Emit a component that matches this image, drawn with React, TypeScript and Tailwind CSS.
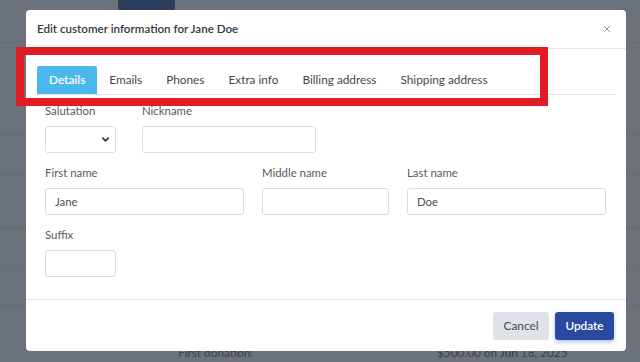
import React from "react";
import { ChevronDown, X } from "lucide-react";

const font = { fontFamily: "Lato, 'Open Sans', sans-serif" };

function Field({ label, width, value, select }: { label: string; width: string; value?: string; select?: boolean }) {
  return (
    <div className={`flex flex-col ${width}`}>
      <div className="h-[15px] text-[11.4px] leading-[15px] text-[#555b63]">{label}</div>
      <div className={`mt-[8px] flex h-[27px] items-center justify-between rounded-[3px] border border-[#d9dce2] bg-white pl-[9px] ${select ? "pr-[4px]" : "pr-[9px]"} text-[11.4px] text-[#4a4f57]`}>
        <span>{value}</span>
        {select && <ChevronDown size={11} strokeWidth={3.5} className="text-[#333]" />}
      </div>
    </div>
  );
}

const tabs = ["Details", "Emails", "Phones", "Extra info", "Billing address", "Shipping address"];

export default function App() {
  return (
    <div className="relative h-[362px] w-[640px] overflow-hidden bg-[#6c727b]" style={font}>
      {/* underlying page (dimmed) */}
      <div className="flex h-full w-full flex-col">
        <div className="flex h-[30px] pl-[118px]">
          <div className="h-[10px] w-[57px] rounded-b-[2px] bg-[#2e3d5c]" />
        </div>
        <div className="mt-[13px] h-px w-full bg-[#666c75]" />
        <div className="mt-[91px] h-px w-full bg-[#666c75]" />
        <div className="mt-[39px] h-px w-full bg-[#666c75]" />
        <div className="mt-[52px] h-px w-full bg-[#62686f]" />
        <div className="mt-[39px] h-px w-full bg-[#666c75]" />
        <div className="mt-[36px] h-px w-full bg-[#666c75]" />
        <div className="mt-[39px] flex h-[18px] items-center bg-[#6d737c] pl-[178px] text-[11.8px] text-[#3c4047]">
          <span className="w-[259px]">First donation:</span>
          <span>$500.00 on Jun 18, 2025</span>
        </div>
      </div>

      {/* modal */}
      <div className="absolute left-[26px] top-[10px] flex h-[341px] w-[600px] flex-col rounded-[4px] bg-white">
        <div className="flex h-[39px] shrink-0 items-center justify-between border-b border-[#e4e6ea] pl-[11px] pr-[14px]">
          <span className="text-[11.6px] font-semibold text-[#33373d]">Edit customer information for Jane Doe</span>
          <X size={10} strokeWidth={1.8} className="text-[#6b6f75]" />
        </div>
        <div className="flex flex-1 flex-col">
          <div className="mx-[11px] mt-[17px] flex h-[29px] border-b border-[#dfe2e6]">
            {tabs.map((t, i) => (
              <div
                key={t}
                className={
                  i === 0
                    ? "flex h-[28px] items-center rounded-t-[2px] bg-[#4ab8ec] px-[12px] text-[11.8px] font-semibold text-white"
                    : "flex h-[28px] items-center px-[12px] text-[11.8px] text-[#43474d]"
                }
              >
                {t}
              </div>
            ))}
          </div>
          <div className="flex flex-col gap-[12px] px-[19px] pt-[8px]">
            <div className="flex gap-[26px]">
              <Field label="Salutation" width="w-[71px]" select />
              <Field label="Nickname" width="w-[174px]" />
            </div>
            <div className="flex gap-[18px]">
              <Field label="First name" width="w-[199px]" value="Jane" />
              <Field label="Middle name" width="w-[127px]" />
              <Field label="Last name" width="w-[199px]" value="Doe" />
            </div>
            <div className="flex">
              <Field label="Suffix" width="w-[71px]" />
            </div>
          </div>
        </div>
        <div className="flex h-[52px] shrink-0 items-start justify-end gap-[6px] border-t border-[#e1e3e7] pr-[12px] pt-[12px]">
          <button className="h-[28px] w-[56px] rounded-[3px] bg-[#dfe2e6] text-[11.8px] text-[#454a51]">Cancel</button>
          <button className="h-[28px] w-[59px] rounded-[3px] bg-[#2a4a9f] text-[11.8px] font-semibold text-white shadow-[0_2px_4px_rgba(42,74,159,0.35)]">Update</button>
        </div>
      </div>

      {/* red annotation box */}
      <div className="absolute left-[16px] top-[47px] h-[59px] w-[532px] border-[8px] border-[#e31b23]" />
    </div>
  );
}
